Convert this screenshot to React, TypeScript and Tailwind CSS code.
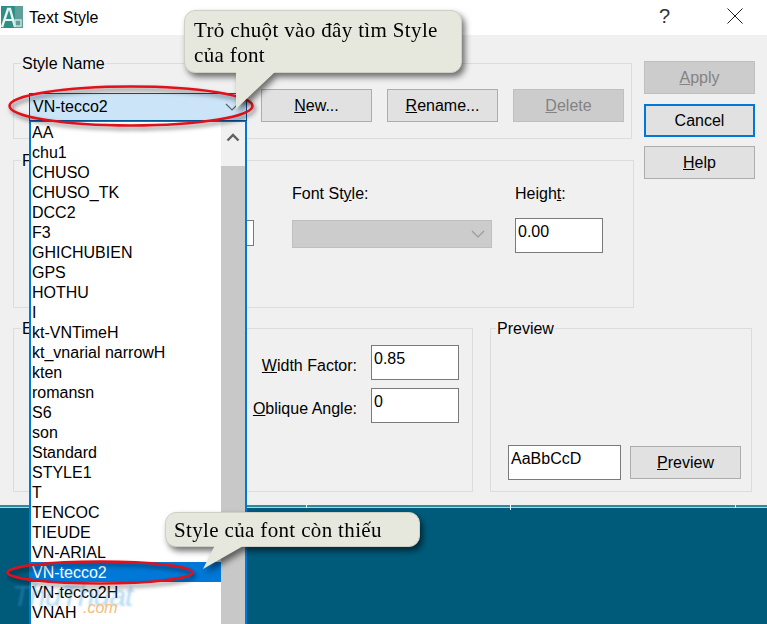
import type { ReactNode } from 'react'

const FONTS = [
  'AA', 'chu1', 'CHUSO', 'CHUSO_TK', 'DCC2', 'F3', 'GHICHUBIEN', 'GPS', 'HOTHU', 'I',
  'kt-VNTimeH', 'kt_vnarial narrowH', 'kten', 'romansn', 'S6', 'son', 'Standard', 'STYLE1',
  'T', 'TENCOC', 'TIEUDE', 'VN-ARIAL', 'VN-tecco2', 'VN-tecco2H', 'VNAH',
]

function Btn({ children, disabled, focused, className = '' }: { children: ReactNode; disabled?: boolean; focused?: boolean; className?: string }) {
  let look = 'border border-[#adadad] bg-[#e1e1e1] text-black'
  if (disabled) look = 'border border-[#bfbfbf] bg-[#cccccc] text-[#838383]'
  if (focused) look = 'border-2 border-[#0078d7] bg-[#e1e1e1] text-black'
  return <div className={`flex h-[33px] w-[111px] shrink-0 items-center justify-center ${look} ${className}`}>{children}</div>
}

function Group({ label, labelClass = 'left-[7px]', className = '', children }: { label: string; labelClass?: string; className?: string; children?: ReactNode }) {
  return (
    <div className={`relative border border-[#dcdcdc] ${className}`}>
      <span className={`absolute top-[-10px] bg-[#f0f0f0] px-px leading-[20px] ${labelClass}`}>{label}</span>
      {children}
    </div>
  )
}

function Field({ value, className = '' }: { value?: string; className?: string }) {
  return <div className={`h-[35px] shrink-0 border border-[#7a7a7a] bg-white pl-[2px] pt-[3px] leading-[20px] ${className}`}>{value}</div>
}

function Chevron({ color = '#606060', className = '' }: { color?: string; className?: string }) {
  return (
    <svg width="14" height="8" viewBox="0 0 14 8" className={className}>
      <polyline points="1,1 7,7 13,1" fill="none" stroke={color} strokeWidth="1.2" />
    </svg>
  )
}

function Callout({ className, tail, tailClass, tailBox, children }: { className: string; tail: string; tailClass: string; tailBox: string; children: ReactNode }) {
  return (
    <div className={`absolute drop-shadow-[3px_4px_3px_rgba(0,0,0,0.55)] ${className}`}>
      <div className="h-full rounded-[11px] border border-[#cfd0c4] bg-[#e6e7dd] font-['Liberation_Serif',serif] text-[21px] leading-[25px] tracking-[0.35px] text-black">
        {children}
      </div>
      <svg viewBox={tailBox} className={`absolute ${tailClass}`}>
        <polygon points={tail} fill="#e6e7dd" />
      </svg>
    </div>
  )
}

function RedEllipse({ className, w, h }: { className: string; w: number; h: number }) {
  return (
    <svg width={w} height={h} viewBox={`0 0 ${w} ${h}`} className={`absolute drop-shadow-[2px_3px_2px_rgba(0,0,0,0.5)] ${className}`}>
      <ellipse cx={w / 2} cy={h / 2} rx={w / 2 - 1.5} ry={h / 2 - 1.5} fill="none" stroke="#e2101a" strokeWidth="2.5" />
    </svg>
  )
}

export default function App() {
  return (
    <div className="relative h-[624px] w-[767px] overflow-hidden bg-[#005b7b] font-['Liberation_Sans',sans-serif] text-[16px] text-black">
      {/* title bar */}
      <div className="flex h-[35px] items-center bg-white">
        <svg width="22" height="22" viewBox="0 0 22 22" className="ml-px mb-[2px]">
          <rect width="22" height="22" fill="#2f8f86" />
          <rect x="14" y="0" width="8" height="22" fill="#5f9f99" />
          <polyline points="1,21 7,3 9,3 14,21" fill="none" stroke="#e8f4f2" strokeWidth="2.4" />
          <line x1="3" y1="14" x2="12" y2="14" stroke="#e8f4f2" strokeWidth="2" />
          <rect x="14" y="14" width="6" height="6" fill="none" stroke="#cfe3e0" strokeWidth="1.4" />
        </svg>
        <span className="ml-[6px] mt-[1px]">Text Style</span>
        <span className="ml-auto mb-[3px] text-[20px] text-[#333]">?</span>
        <svg width="16" height="16" viewBox="0 0 16 16" className="ml-[57px] mr-[24px] mb-[3px]">
          <path d="M0.5 0.5 L15.5 15.5 M15.5 0.5 L0.5 15.5" stroke="#222" strokeWidth="1" />
        </svg>
      </div>

      {/* dialog body */}
      <div className="h-[470px] bg-[#f0f0f0] pl-[13px] pt-[26px]">
        <div className="flex">
          <div className="w-[621px] pt-[2px]">
            <Group label="Style Name" className="flex h-[76px] w-[619px] pl-[15px] pt-[25px]">
              <div className="mt-[4px] flex h-[28px] w-[218px] shrink-0 items-center justify-between border border-[#005499] bg-[#cce4f7] pl-[3px] pr-[7px]">
                <span>VN-tecco2</span>
                <Chevron />
              </div>
              <Btn className="ml-[14px]"><span><u>N</u>ew...</span></Btn>
              <Btn className="ml-[15px]"><span><u>R</u>ename...</span></Btn>
              <Btn disabled className="ml-[15px]"><span><u>D</u>elete</span></Btn>
            </Group>
            <Group label="Font" className="mt-[21px] flex h-[148px] w-[621px] pt-[23px]">
              <div className="flex w-[240px] shrink-0 flex-col items-end pt-[36px]">
                <div className="h-[26px] w-[100px] border border-[#7a7a7a] bg-white" />
              </div>
              <div className="ml-[38px] w-[200px] shrink-0">
                <div className="leading-[20px]">Font St<u>y</u>le:</div>
                <div className="mt-[16px] flex h-[28px] items-center justify-end border border-[#bfbfbf] bg-[#cccccc] pr-[6px]">
                  <Chevron color="#9a9a9a" />
                </div>
              </div>
              <div className="ml-[23px] w-[88px] shrink-0">
                <div className="leading-[20px]">Heigh<u>t</u>:</div>
                <Field value="0.00" className="mt-[14px]" />
              </div>
            </Group>
          </div>
          <div className="ml-[10px] flex flex-col">
            <Btn disabled className="pt-px"><span><u>A</u>pply</span></Btn>
            <Btn focused className="mt-[10px]">Cancel</Btn>
            <Btn className="mt-[9px]"><span><u>H</u>elp</span></Btn>
          </div>
        </div>

        <div className="mt-[20px] flex">
          <Group label="Effects" className="flex h-[164px] w-[460px] flex-col items-end gap-[8px] pr-[13px] pt-[16px]">
            <div className="flex items-center gap-[14px]">
              <span className="pt-[6px]"><u>W</u>idth Factor:</span>
              <Field value="0.85" className="w-[88px]" />
            </div>
            <div className="flex items-center gap-[14px]">
              <span className="pt-[6px]"><u>O</u>blique Angle:</span>
              <Field value="0" className="w-[88px]" />
            </div>
          </Group>
          <Group label="Preview" labelClass="left-[5px]" className="ml-[17px] flex h-[164px] w-[262px] items-end pb-[11px] pl-[17px]">
            <Field value="AaBbCcD" className="w-[113px]" />
            <Btn className="mb-px ml-[9px]"><span><u>P</u>review</span></Btn>
          </Group>
        </div>
      </div>

      {/* drawing area edge, with the ruler ticks */}
      <div className="h-[2px] bg-[#2b8c9c]" />
      <div className="h-px bg-[#b4d0da]" />
      <div className="absolute left-[306px] top-[505px] h-[3px] w-px bg-white" />
      <div className="absolute left-[510px] top-[505px] h-[5px] w-px bg-white" />
      <div className="absolute left-[735px] top-[505px] h-[3px] w-px bg-white" />

      {/* opened style list */}
      <div className="absolute left-[29px] top-[121px] flex h-[510px] w-[218px] border-x-2 border-t border-[#0078d7] bg-white">
        <div className="w-[190px] shrink-0 leading-[22px]">
          {FONTS.map((f) => (
            <div key={f} className={f === 'VN-tecco2' ? 'h-[20px] bg-[#0078d7] pl-[1px] text-white' : 'h-[20px] pl-[1px]'}>
              {f}
            </div>
          ))}
        </div>
        <div className="flex flex-1 flex-col bg-[#f0f0f0]">
          <div className="flex h-[44px] items-start justify-center pt-[11px]">
            <svg width="14" height="9" viewBox="0 0 14 9">
              <polyline points="1.5,7.5 7,2 12.5,7.5" fill="none" stroke="#606060" strokeWidth="2.4" />
            </svg>
          </div>
          <div className="flex-1 bg-[#c8c8c8]" />
        </div>
      </div>

      {/* site watermark */}
      <span className="absolute left-[12px] top-[573px] text-[30px] italic tracking-[-1px] text-[#3f9fe0] opacity-40 blur-[1px]">ThuThuat</span>
      <span className="absolute left-[83px] top-[596px] text-[16px] italic text-[#f7bc78]">.com</span>

      {/* annotations */}
      <RedEllipse className="left-[8px] top-[85px]" w={246} h={42} />
      <RedEllipse className="left-[6px] top-[560px]" w={188} h={25} />

      <Callout
        className="left-[184px] top-[10px] h-[63px] w-[278px]"
        tailBox="0 0 40 38"
        tail="0,0 40,0 0,38"
        tailClass="left-[52px] top-[61px] h-[38px] w-[40px]"
      >
        <div className="pl-[9px] pt-[7px]">
          Trỏ chuột vào đây tìm Style
          <br />
          của font
        </div>
      </Callout>
      <Callout
        className="left-[165px] top-[512px] h-[35px] w-[255px]"
        tailBox="0 0 42 24"
        tail="12,0 42,0 0,24"
        tailClass="left-[38px] top-[33px] h-[24px] w-[42px]"
      >
        <div className="whitespace-nowrap pl-[8px] pt-[5px]">Style của font còn thiếu</div>
      </Callout>
    </div>
  )
}
